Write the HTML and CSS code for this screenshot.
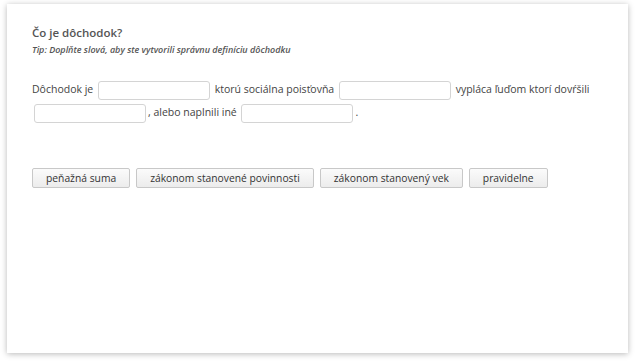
FILE: index.html
```html
<!DOCTYPE html>
<html lang="sk">
<head>
  <meta charset="UTF-8">
  <title>Čo je dôchodok?</title>
  <link rel="stylesheet" href="styles.css">
</head>
<body>
  <div class="card">
    <h1>Čo je dôchodok?</h1>
    <p class="tip">Tip: Doplňte slová, aby ste vytvorili správnu definíciu dôchodku</p>

    <!-- veta s medzerami -->
    <div class="sentence">
      Dôchodok je <span class="gap"></span> ktorú sociálna poisťovňa <span class="gap"></span> vypláca ľuďom ktorí dovŕšili
      <span class="gap"></span>, alebo naplnili iné <span class="gap"></span>.
    </div>

    <!-- slová na doplnenie -->
    <div class="words">
      <button>peňažná suma</button>
      <button>zákonom stanovené povinnosti</button>
      <button>zákonom stanovený vek</button>
      <button>pravidelne</button>
    </div>
  </div>
</body>
</html>
```

FILE: styles.css
```css
body {
  margin: 0;
  padding: 4px 8px 11px 7px;
  background-color: #fff;
  font-family: "Open Sans", Arial, sans-serif;
  color: #444;
}
.card {
  height: 349px;
  box-sizing: border-box;
  background-color: #fff;
  padding: 20px 25px;
  box-shadow: 0 1px 6px rgba(0, 0, 0, 0.28);
}
h1 {
  margin: 0;
  font-size: 11.5px;
  font-weight: 600;
  color: #555;
  line-height: 18px;
}
.tip {
  margin: 1px 0 0;
  font-size: 9px;
  font-style: italic;
  font-weight: 600;
  color: #555;
}
.sentence {
  margin-top: 22px;
  font-size: 10.5px;
  line-height: 23px;
}
.gap {
  display: inline-block;
  width: 110px;
  height: 17px;
  margin: 0 2px;
  border: 1px solid #d4d4d4;
  border-radius: 3px;
  vertical-align: middle;
}
.words {
  display: flex;
  gap: 6px;
  margin-top: 44px;
}
button {
  font-family: inherit;
  font-size: 10.3px;
  color: #333;
  padding: 1px 13px;
  height: 20px;
  background: linear-gradient(#fbfbfb, #ececec);
  border: 1px solid #c8c8c8;
  border-radius: 2px;
}
```
